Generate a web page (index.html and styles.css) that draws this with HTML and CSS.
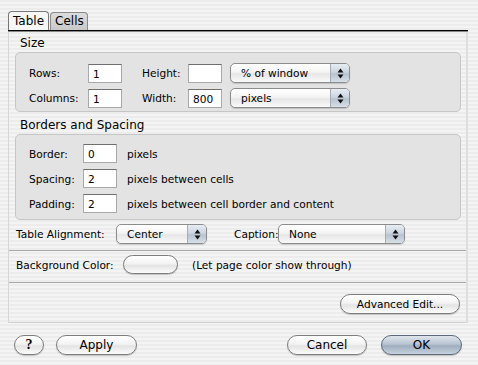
FILE: index.html
```html
<!doctype html>
<html lang="en">
  <head>
    <meta charset="utf-8">
    <title>Table Properties</title>
    <link rel="stylesheet" href="styles.css">
  </head>
  <body>
    <div class="dialog">
      <div class="tabs">
        <div class="tab tab-active">Table</div>
        <div class="tab">Cells</div>
      </div>

      <div class="pane">
        <div class="section-title">Size</div>
        <div class="group group-size">
          <div class="row">
            <span class="label label-size">Rows:</span>
            <div class="field">1</div>
            <span class="label label-dim">Height:</span>
            <div class="field"></div>
            <div class="popup popup-unit"><span>% of window</span><span class="stepper"><svg width="7" height="11" viewBox="0 0 7 11"><path d="M3.5 0.5 L6.5 4.5 L0.5 4.5 Z M3.5 10.5 L6.5 6.5 L0.5 6.5 Z" fill="#111"/></svg></span></div>
          </div>
          <div class="row">
            <span class="label label-size">Columns:</span>
            <div class="field">1</div>
            <span class="label label-dim">Width:</span>
            <div class="field">800</div>
            <div class="popup popup-unit"><span>pixels</span><span class="stepper"><svg width="7" height="11" viewBox="0 0 7 11"><path d="M3.5 0.5 L6.5 4.5 L0.5 4.5 Z M3.5 10.5 L6.5 6.5 L0.5 6.5 Z" fill="#111"/></svg></span></div>
          </div>
        </div>

        <div class="section-title">Borders and Spacing</div>
        <div class="group group-borders">
          <div class="row">
            <span class="label label-border">Border:</span>
            <div class="field">0</div>
            <span class="hint">pixels</span>
          </div>
          <div class="row">
            <span class="label label-border">Spacing:</span>
            <div class="field">2</div>
            <span class="hint">pixels between cells</span>
          </div>
          <div class="row">
            <span class="label label-border">Padding:</span>
            <div class="field">2</div>
            <span class="hint">pixels between cell border and content</span>
          </div>
        </div>

        <div class="row row-align">
          <span class="label label-align">Table Alignment:</span>
          <div class="popup popup-align"><span>Center</span><span class="stepper"><svg width="7" height="11" viewBox="0 0 7 11"><path d="M3.5 0.5 L6.5 4.5 L0.5 4.5 Z M3.5 10.5 L6.5 6.5 L0.5 6.5 Z" fill="#111"/></svg></span></div>
          <span class="label label-caption">Caption:</span>
          <div class="popup popup-caption"><span>None</span><span class="stepper"><svg width="7" height="11" viewBox="0 0 7 11"><path d="M3.5 0.5 L6.5 4.5 L0.5 4.5 Z M3.5 10.5 L6.5 6.5 L0.5 6.5 Z" fill="#111"/></svg></span></div>
        </div>

        <div class="separator"></div>

        <div class="row row-bg">
          <span class="label label-bg">Background Color:</span>
          <div class="button color-well"></div>
          <span class="hint">(Let page color show through)</span>
        </div>

        <div class="separator"></div>

        <div class="row row-advanced">
          <div class="button button-advanced">Advanced Edit...</div>
        </div>
      </div>

      <div class="footer">
        <div class="button button-help">?</div>
        <div class="button button-apply">Apply</div>
        <div class="spacer"></div>
        <div class="button button-cancel">Cancel</div>
        <div class="button button-ok">OK</div>
      </div>
    </div>
  </body>
</html>
```

FILE: styles.css
```css
* { box-sizing: border-box; }

:root {
  --font-family: "DejaVu Sans", sans-serif;
  --stripe-a: #ececec;
  --stripe-b: #f4f4f4;
  --group-bg: #e3e3e3;
  --group-border: #c6c6c6;
}

html,
body {
  margin: 0;
  padding: 0;
  width: 478px;
  height: 365px;
  overflow: hidden;
  font-family: var(--font-family);
  font-size: 10.6px;
  color: #000;
  background: repeating-linear-gradient(var(--stripe-a) 0 2px, var(--stripe-b) 2px 4px);
}

.dialog {
  padding: 12px 10px 0 8px;
}

/* Tabs */
.tabs {
  display: flex;
  align-items: flex-end;
  height: 19px;
  border-bottom: 1px solid #000;
  box-shadow: 0 1px 0 #888;
}
.tab {
  height: 18px;
  padding: 1px 3px 0 4px;
  border: 1px solid #8a8a8a;
  border-bottom: none;
  border-radius: 4px 4px 0 0;
  background: linear-gradient(#dcdcdc, #c9c9c9);
  font-size: 12px;
}
.tab-active {
  height: 19px;
  padding: 2px 4px 0 4px;
  background: #f6f6f6;
  border-color: #777;
  margin-right: 1px;
}

/* Pane */
.pane {
  margin-top: 1px;
  height: 291px;
  border-left: 1px solid #d6d6d6;
  border-right: 2px solid #dedede;
  border-bottom: 1px solid #d2d2d2;
  padding: 3px 5px 0 6px;
  display: flex;
  flex-direction: column;
}

.section-title {
  font-size: 12px;
  line-height: 16px;
  padding-left: 5px;
}
.section-title + .group {
  margin-top: 1px;
}
.group {
  background: var(--group-bg);
  border: 1px solid var(--group-border);
  border-radius: 5px;
  display: flex;
  flex-direction: column;
}
.group-size {
  height: 60px;
  padding: 10px 0 0 13px;
  gap: 5px;
  margin-bottom: 5px;
}
.group-borders {
  height: 86px;
  padding: 9px 0 0 13px;
  gap: 6px;
}

.row {
  display: flex;
  align-items: center;
}

.label {
  white-space: nowrap;
}
.label-size { width: 59px; }
.label-dim { width: 46px; margin-left: 20px; }
.label-border { width: 54px; }
.label-align { width: 100px; }
.label-caption { width: 44px; margin-left: 27px; }
.label-bg { width: 107px; }

.hint {
  margin-left: 10px;
}

.field {
  width: 34px;
  height: 19px;
  background: #fff;
  border: 1px solid #a9a9a9;
  border-top-color: #6f6f6f;
  padding: 3px 0 0 4px;
  line-height: 13px;
}

/* Popup menus */
.popup {
  display: flex;
  align-items: center;
  justify-content: space-between;
  height: 20px;
  border: 1px solid #8c8c8c;
  border-radius: 5px;
  background: linear-gradient(#ffffff 0%, #f4f4f4 45%, #e6e6e6 55%, #fafafa 100%);
  box-shadow: 0 1px 1px rgba(0, 0, 0, 0.15);
  padding-left: 10px;
  overflow: hidden;
}
.stepper {
  width: 19px;
  height: 100%;
  display: flex;
  align-items: center;
  justify-content: center;
  border-left: 1px solid #a4acb6;
  background: linear-gradient(#e8edf3 0%, #ccd5df 45%, #b7c3d0 55%, #d8e0e8 100%);
}
.popup-unit { width: 120px; margin-left: 8px; }
.popup-align { width: 91px; }
.popup-caption { width: 127px; }

.row-align {
  margin-top: 4px;
  padding-left: 1px;
}

.separator {
  height: 1px;
  background: #a8a8a8;
  margin: 6px -5px 0 -6px;
}

.row-bg {
  height: 25px;
  padding: 2px 0 0 1px;
}

.row-advanced {
  justify-content: flex-end;
  margin-top: 11px;
  padding-right: 1px;
}

/* Buttons */
.button {
  height: 20px;
  border: 1px solid #7d7d7d;
  border-radius: 10px;
  background: linear-gradient(#ffffff 0%, #f3f3f3 45%, #e4e4e4 55%, #fbfbfb 100%);
  box-shadow: 0 1px 1px rgba(0, 0, 0, 0.2);
  display: flex;
  align-items: center;
  justify-content: center;
  font-size: 12px;
}
.color-well {
  width: 55px;
  height: 19px;
  margin-right: 4px;
}
.button-advanced {
  width: 120px;
  font-size: 10.6px;
}

.footer {
  display: flex;
  align-items: center;
  margin-top: 12px;
  padding-left: 6px;
}
.button-help {
  width: 30px;
  font-weight: bold;
  font-family: "Liberation Serif", serif;
  font-size: 14px;
}
.button-apply { width: 81px; margin-left: 12px; }
.spacer { flex: 1; }
.button-cancel { width: 80px; margin-right: 14px; }
.button-ok {
  width: 81px;
  margin-right: 6px;
  border-color: #5f6a78;
  background: linear-gradient(#dfe5ec 0%, #b9c4d1 45%, #9eadbf 55%, #c7d2de 100%);
}
```
